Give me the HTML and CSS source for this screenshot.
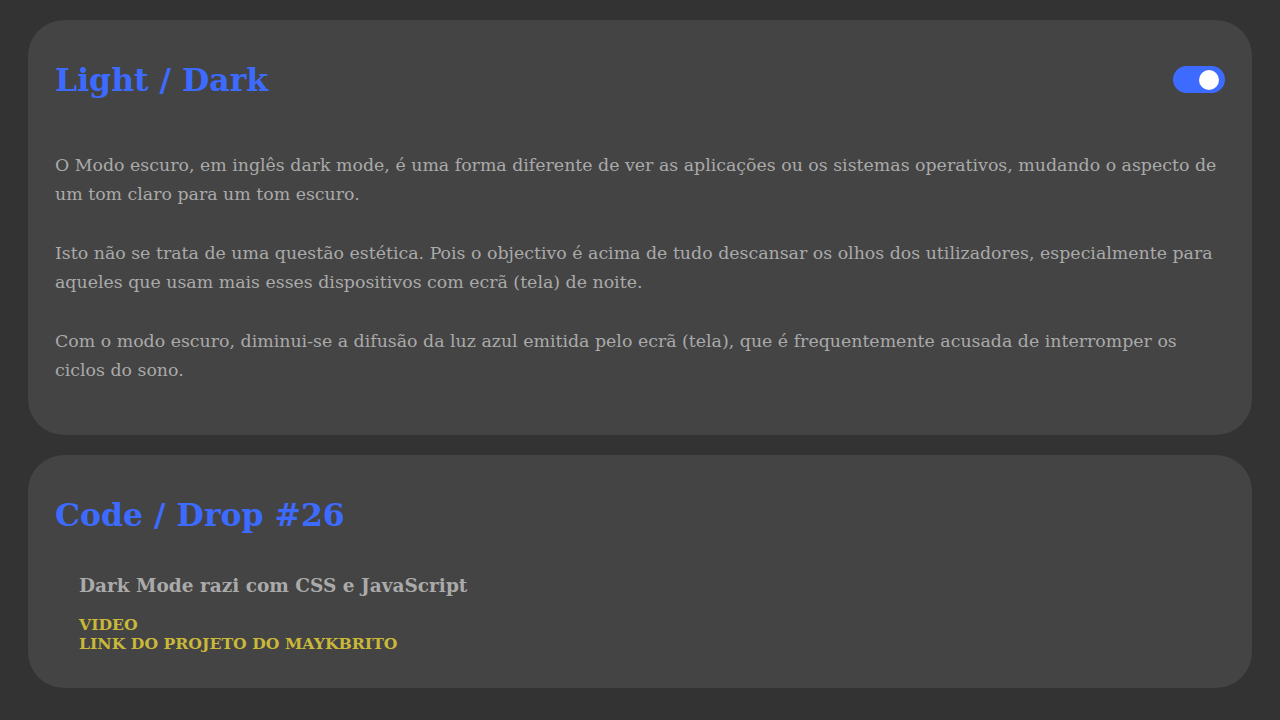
FILE: index.html
```html
<!DOCTYPE html>
<html lang="pt">
<head>
<meta charset="utf-8">
<title>Light / Dark</title>
<link rel="stylesheet" href="styles.css">
</head>
<body>
<main class="page">
  <section class="card card-intro">
    <header class="card-header">
      <h1 class="title">Light / Dark</h1>
      <button class="toggle" aria-label="Alternar modo"><span class="knob"></span></button>
    </header>
    <div class="text">
      <p>O Modo escuro, em inglês dark mode, é uma forma diferente de ver as aplicações ou os sistemas operativos, mudando o aspecto de um tom claro para um tom escuro.</p>
      <p>Isto não se trata de uma questão estética. Pois o objectivo é acima de tudo descansar os olhos dos utilizadores, especialmente para aqueles que usam mais esses dispositivos com ecrã (tela) de noite.</p>
      <p>Com o modo escuro, diminui-se a difusão da luz azul emitida pelo ecrã (tela), que é frequentemente acusada de interromper os ciclos do sono.</p>
    </div>
  </section>
  <section class="card card-code">
    <header class="card-header">
      <h1 class="title">Code / Drop #26</h1>
    </header>
    <div class="drop">
      <h3 class="drop-title">Dark Mode razi com CSS e JavaScript</h3>
      <div class="links">
        <a class="link" href="#">VIDEO</a>
        <a class="link" href="#">LINK DO PROJETO DO MAYKBRITO</a>
      </div>
    </div>
  </section>
</main>
</body>
</html>
```
FILE: styles.css
```css
* { box-sizing: border-box; }
html, body { margin: 0; padding: 0; }
body {
  background: #333333;
  font-family: "DejaVu Serif", serif;
  color: #aaaaaa;
}
.page {
  padding: 20px 28px;
  display: flex;
  flex-direction: column;
  gap: 20px;
}
.card {
  background: #444444;
  border-radius: 36px;
  padding: 41px 27px 50px;
}
.card-code { padding-bottom: 35px; }
.card-header {
  display: flex;
  justify-content: space-between;
  align-items: center;
  height: 37px;
}
.title {
  margin: 0;
  font-size: 31.5px;
  font-weight: bold;
  color: #3d6bff;
  line-height: 37px;
}
.toggle {
  width: 52px;
  height: 27px;
  border: none;
  border-radius: 14px;
  background: #3d6bff;
  padding: 0 6px 0 0;
  display: flex;
  align-items: center;
  justify-content: flex-end;
  cursor: pointer;
}
.knob {
  width: 20px;
  height: 20px;
  border-radius: 50%;
  background: #ffffff;
}
.text { margin-top: 53px; }
.text p {
  margin: 0 0 30px;
  font-size: 17.36px;
  line-height: 29px;
  color: #aaaaaa;
}
.text p:last-child { margin-bottom: 0; }
.drop {
  padding-left: 24px;
  margin-top: 42px;
}
.drop-title {
  margin: 0;
  font-size: 18.5px;
  font-weight: bold;
  color: #aaaaaa;
  line-height: 22px;
}
.links {
  margin-top: 18px;
  display: flex;
  flex-direction: column;
}
.link {
  font-size: 15.7px;
  font-weight: bold;
  color: #c9b83a;
  text-decoration: none;
  line-height: 19px;
}
```
